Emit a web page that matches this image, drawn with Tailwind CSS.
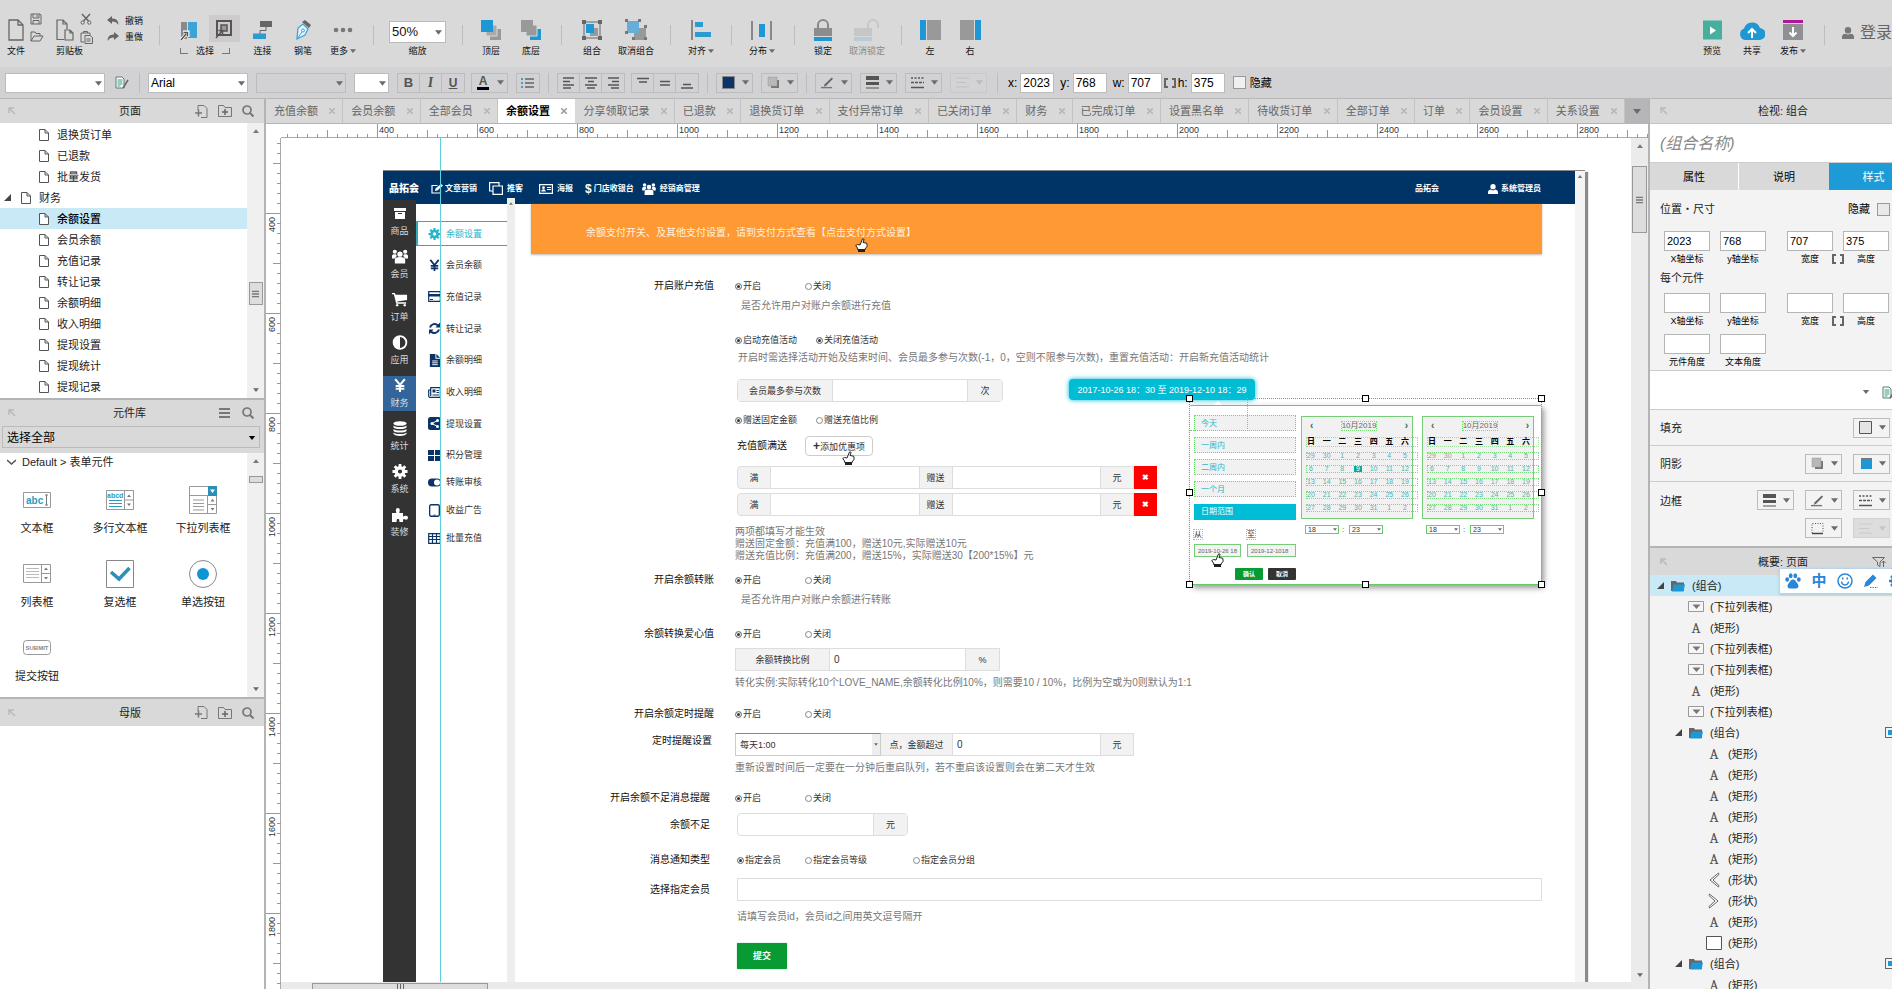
<!DOCTYPE html>
<html lang="zh-CN">
<head>
<meta charset="utf-8">
<title>余额设置</title>
<script src="https://cdn.jsdelivr.net/npm/@tailwindcss/browser@4"></script>
</head>
<body class="flex h-screen flex-col overflow-hidden bg-[#d9d9d9] font-['Liberation_Sans','Noto_Sans_CJK_SC',sans-serif] text-[11px] leading-4 text-[#222]">

<svg class="hidden" aria-hidden="true">
  <symbol id="caret" viewBox="0 0 8 5"><path d="M0 0h8L4 5z" fill="#6b6b6b"/></symbol>
  <symbol id="caretup" viewBox="0 0 8 5"><path d="M0 5h8L4 0z" fill="#777"/></symbol>
  <symbol id="doc" viewBox="0 0 10 12"><path d="M.5.5h5.500l3.500 3.500v7.500h-9zM6 .5v3.500h3.500" fill="#fff" stroke="#555"/></symbol>
  <symbol id="bigdoc" viewBox="0 0 16 22"><path d="M1 1h9l5 5v15H1zM10 1v5h5" fill="none" stroke="#666" stroke-width="1.300"/></symbol>
  <symbol id="save" viewBox="0 0 12 12"><path d="M1 1h9l1 1v9H1zM3 1v4h6V1M3 11V7.500h6V11M7 2v2" fill="none" stroke="#666"/></symbol>
  <symbol id="open" viewBox="0 0 14 11"><path d="M1 10V1h4l1 1.500h4V5M1 10l3-5h9l-3 5z" fill="none" stroke="#666" stroke-linejoin="round"/></symbol>
  <symbol id="docs" viewBox="0 0 18 22"><path d="M8 20.500H1V1h6l4 4v5M7 1v4h4M9 11h5l3 3v7H9zM14 11v3h3" fill="none" stroke="#666" stroke-width="1.200"/></symbol>
  <symbol id="cut" viewBox="0 0 12 12"><path d="M2 1l6.500 7M10 1L3.500 8" stroke="#666" stroke-width="1.500" fill="none"/><circle cx="2.700" cy="9.500" r="1.700" fill="none" stroke="#666"/><circle cx="9.300" cy="9.500" r="1.700" fill="none" stroke="#666"/></symbol>
  <symbol id="paste" viewBox="0 0 13 13"><path d="M4 11H1V2h9v2M3.500 2V.5h4V2M5 4.500h5l2.500 2V12.500H5zM6.500 8h4M6.500 10h4" fill="none" stroke="#666"/></symbol>
  <symbol id="undo" viewBox="0 0 12 10"><path d="M0 4l5-4v2.500c4 0 6.500 2 6.500 6.500C10 6.500 8 5.500 5 5.500V8z" fill="#666"/></symbol>
  <symbol id="redo" viewBox="0 0 12 10"><path d="M12 4L7 0v2.500C3 2.500.5 4.500.5 9 2 6.500 4 5.500 7 5.500V8z" fill="#666"/></symbol>
  <symbol id="sel1" viewBox="0 0 18 20"><path d="M1 1h6v17H1z" fill="#8a8a8a"/><path d="M8 1h9v16H8z" fill="#3da4d8"/><path d="M1 19l5-6M3 11h5v5" stroke="#fff" stroke-width="3" fill="none"/><path d="M1 19l5-6M3.500 11.500h4v4" stroke="#555" stroke-width="1.500" fill="none"/></symbol>
  <symbol id="sel2" viewBox="0 0 18 20"><path d="M2 2h14v14H2z" fill="none" stroke="#555" stroke-width="2"/><path d="M6 6h6v6H6z" fill="#999" stroke="#555" stroke-width="1.500"/><path d="M1 19l6-7M3.500 11.500h4v4" stroke="#555" stroke-width="1.500" fill="none"/></symbol>
  <symbol id="connect" viewBox="0 0 20 20"><path d="M7 1h12v6H7z" fill="#666"/><path d="M13 7v3.500H7V14" stroke="#666" fill="none"/><path d="M0 13.500h13V19H0z" fill="#2b9bd4"/></symbol>
  <symbol id="pen" viewBox="0 0 16 20"><path d="M2 19L3 8l5-4 5 5-3 6z" fill="#e8f4fb" stroke="#3da4d8" stroke-width="1.300"/><path d="M2 19l5-7" stroke="#3da4d8"/><circle cx="8" cy="10.500" r="1.500" fill="none" stroke="#3da4d8"/><path d="M7 2l3-2 6 5-2 3z" fill="#666"/></symbol>
  <symbol id="front" viewBox="0 0 20 20"><path d="M9 9h11v11H9z" fill="#999"/><path d="M5 5h11v11H5z" fill="#aaa" stroke="#d9d9d9"/><path d="M0 0h12v12H0z" fill="#1f97d4"/></symbol>
  <symbol id="back" viewBox="0 0 20 20"><path d="M9 9h11v11H9z" fill="#1f97d4"/><path d="M5 5h11v11H5z" fill="#999" stroke="#d9d9d9"/><path d="M0 0h12v12H0z" fill="#999"/></symbol>
  <symbol id="group" viewBox="0 0 22 22"><path d="M3 3h16v16H3z" fill="none" stroke="#666"/><path d="M9 9h8v8H9z" fill="#999"/><path d="M5 5h8v9H5z" fill="#1f97d4"/><path d="M1 1h4v4H1zM17 1h4v4h-4zM1 17h4v4H1zM17 17h4v4h-4z" fill="#666"/></symbol>
  <symbol id="ungroup" viewBox="0 0 24 22"><path d="M10 9h12v12H10z" fill="#999"/><path d="M3 2h12v12H3z" fill="#68add8"/><path d="M1 0h3v3H1zM14 0h3v3h-3zM1 12h3v3H1zM20 6h3v3h-3zM8 18h3v3H8zM20 18h3v3h-3z" fill="#777"/></symbol>
  <symbol id="align" viewBox="0 0 20 20"><path d="M0 0h2v20H0z" fill="#888"/><path d="M4 2h8v5H4zM4 12h16v5H4z" fill="#2b9bd4"/></symbol>
  <symbol id="dist" viewBox="0 0 22 20"><path d="M0 1h2v19H0zM19 1h2v19h-2z" fill="#888"/><path d="M8 4h6v13H8z" fill="#1f97d4"/></symbol>
  <symbol id="lock" viewBox="0 0 18 22"><path d="M4 10V6a5 5 0 0 1 10 0v4" fill="none" stroke="#888" stroke-width="2"/><path d="M0 9h18v8H0z" fill="#8c8c8c"/><path d="M0 18h18v4H0z" fill="#1f97d4"/></symbol>
  <symbol id="unlock" viewBox="0 0 26 22"><path d="M14 9V6a5 5 0 0 1 10 0v3" fill="none" stroke="#c6c6c6" stroke-width="2"/><path d="M0 9h18v8H0z" fill="#c6c6c6"/><path d="M0 18h18v4H0z" fill="#b7cbd9"/></symbol>
  <symbol id="pleft" viewBox="0 0 21 20"><path d="M0 0h6v20H0z" fill="#1f97d4"/><path d="M7 0h14v20H7z" fill="#999"/></symbol>
  <symbol id="pright" viewBox="0 0 21 20"><path d="M15 0h6v20h-6z" fill="#1f97d4"/><path d="M0 0h14v20H0z" fill="#999"/></symbol>
  <symbol id="play" viewBox="0 0 19 19"><path d="M0 0h19v19H0z" fill="#47b09c"/><path d="M7 6v8l6-4z" fill="#fff"/></symbol>
  <symbol id="cloud" viewBox="0 0 26 20"><path d="M6 20a6 6 0 0 1-1-11.500A8.500 8.500 0 0 1 21 8a6 6 0 0 1-1 12z" fill="#1f97d4"/><path d="M13 18V9M9 13l4-4 4 4" stroke="#fff" stroke-width="2" fill="none"/></symbol>
  <symbol id="publish" viewBox="0 0 20 20"><path d="M0 0h20v3H0z" fill="#b0189b"/><path d="M0 4h20v16H0z" fill="#8f8f94"/><path d="M10 7v9M6.500 12.500L10 16l3.500-3.500" stroke="#fff" stroke-width="2" fill="none"/></symbol>
  <symbol id="user" viewBox="0 0 12 12"><circle cx="6" cy="3.200" r="3.200"/><path d="M0 12V9.500C0 7.500 2 7 3.500 6.500a4 4 0 0 0 5 0C10 7 12 7.500 12 9.500V12z"/></symbol>
  <symbol id="styledoc" viewBox="0 0 14 13"><path d="M1 1h6l2 2v9H1z" fill="#fff" stroke="#5a7a70"/><path d="M2.500 4h5M2.500 6h5M2.500 8h5M2.500 10h3" stroke="#2e9c7a"/><path d="M8 12l5-8" stroke="#666" stroke-width="1.500"/></symbol>
  <symbol id="bullets" viewBox="0 0 14 12"><path d="M0 1h2v2H0zM0 5h2v2H0zM0 9h2v2H0z" fill="#4a9cc8"/><path d="M4 2h9M4 6h9M4 10h9" stroke="#666" stroke-width="1.500"/></symbol>
  <symbol id="al" viewBox="0 0 12 12"><path d="M0 1h11M0 4.500h7M0 8h11M0 11h8" stroke="#555" stroke-width="1.500"/></symbol>
  <symbol id="ac" viewBox="0 0 12 12"><path d="M0 1h12M3 4.500h6M0 8h12M2 11h8" stroke="#555" stroke-width="1.500"/></symbol>
  <symbol id="ar" viewBox="0 0 12 12"><path d="M1 1h11M5 4.500h7M1 8h11M4 11h8" stroke="#555" stroke-width="1.500"/></symbol>
  <symbol id="vt" viewBox="0 0 12 12"><path d="M0 1.500h12M2 5h8" stroke="#555" stroke-width="1.500"/></symbol>
  <symbol id="vm" viewBox="0 0 12 12"><path d="M1 4.500h10M1 8h10" stroke="#555" stroke-width="1.500"/></symbol>
  <symbol id="vb" viewBox="0 0 12 12"><path d="M2 7.500h8M0 11h12" stroke="#555" stroke-width="1.500"/></symbol>
  <symbol id="fillnavy" viewBox="0 0 13 13"><path d="M.5.5h12v12H.5z" fill="#0b3468" stroke="#888"/></symbol>
  <symbol id="fillgray" viewBox="0 0 13 13"><path d="M.5.5h12v12H.5z" fill="#e4e4e6" stroke="#555"/></symbol>
  <symbol id="fillblue" viewBox="0 0 13 13"><path d="M2 1h11v11H2z" fill="#1f97d4"/><path d="M2.500 12V1.500H13" fill="none" stroke="#777"/></symbol>
  <symbol id="shadow" viewBox="0 0 13 13"><path d="M4 4h8v8H4z" fill="#777"/><path d="M1 1h9v9H1z" fill="#b8b8b8" stroke="#999" stroke-width=".5"/></symbol>
  <symbol id="pencil" viewBox="0 0 14 13"><path d="M4 8.500l7.500-7.500 1.500 1.500-7.500 7.500-2.500 1z" fill="#666"/><path d="M0 12h12" stroke="#777" stroke-width="1.500"/></symbol>
  <symbol id="lines" viewBox="0 0 13 13"><path d="M0 0h13v4H0zM0 6h13v3H0zM0 11.500h13v1H0z" fill="#555"/></symbol>
  <symbol id="dashes" viewBox="0 0 13 13"><path d="M0 2h13" stroke="#555" stroke-width="1.500" stroke-dasharray="2 1.500"/><path d="M0 6.500h13" stroke="#555" stroke-width="1.500" stroke-dasharray="3 1"/><path d="M0 11.500h13" stroke="#555" stroke-width="1.500"/></symbol>
  <symbol id="arrows" viewBox="0 0 13 13"><path d="M0 2h13M0 6.500h10M0 11h13" stroke="#bbb"/></symbol>
  <symbol id="borderbox" viewBox="0 0 13 13"><path d="M1 11V1.500h11V11" fill="none" stroke="#555" stroke-dasharray="1 1.500"/><path d="M1 11.500h11" stroke="#444" stroke-width="1.500"/></symbol>
  <symbol id="link" viewBox="0 0 12 10"><path d="M4 1H1v8h3M8 1h3v8H8" fill="none" stroke="#666" stroke-width="2"/></symbol>
  <symbol id="pin" viewBox="0 0 8 8"><path d="M1 6V1h5M1 1l6 6" fill="none" stroke="#b9b9b9" stroke-width="1.500"/></symbol>
  <symbol id="addpage" viewBox="0 0 13 13"><path d="M3 5V.5h6l3 3v9H6" fill="none" stroke="#777"/><path d="M0 8h7M3.500 4.500v7" stroke="#777" stroke-width="1.500"/></symbol>
  <symbol id="addfolder" viewBox="0 0 14 12"><path d="M.5 11.500v-11h5L7 2.500h6.500v9z" fill="none" stroke="#777"/><path d="M4 7h6M7 4v6" stroke="#666" stroke-width="1.500"/></symbol>
  <symbol id="search" viewBox="0 0 12 12"><circle cx="5" cy="5" r="4" fill="none" stroke="#777" stroke-width="1.700"/><path d="M8 8l3.500 3.500" stroke="#777" stroke-width="2"/></symbol>
  <symbol id="menu" viewBox="0 0 11 10"><path d="M0 1h11M0 5h11M0 9h11" stroke="#777" stroke-width="2"/></symbol>
  <symbol id="tri" viewBox="0 0 7 7"><path d="M7 0v7H0z" fill="#444"/></symbol>
  <symbol id="folder" viewBox="0 0 14 12"><path d="M0 11V1h5l1 1.500h7V11z" fill="#666"/><path d="M1 11.500L2.500 4.500H14L12.500 11.500z" fill="#1f97d4"/></symbol>
  <symbol id="drop" viewBox="0 0 16 11"><path d="M.5 10.500V.5h15v10z" fill="#f6f6f6" stroke="#999"/><path d="M4.500 3.500h8L8.500 8z" fill="#777"/></symbol>
  <symbol id="rect" viewBox="0 0 16 14"><path d="M.5.5h15v13H.5z" fill="#fff" stroke="#555"/></symbol>
  <symbol id="lt" viewBox="0 0 12 16"><path d="M10.500 1L2 8l8.500 7 .5-1.500L5 8l6-5.500z" fill="#fff" stroke="#666"/></symbol>
  <symbol id="gt" viewBox="0 0 12 16"><path d="M1.500 1L10 8l-8.500 7L1 13.500 7 8 1 2.500z" fill="#fff" stroke="#666"/></symbol>
  <symbol id="funnel" viewBox="0 0 14 10"><path d="M.5.5h12L8 5v4.500L5.500 8V5zM11.500 10V4M9.500 6l2-2 2 2" fill="none" stroke="#666"/></symbol>
  <symbol id="hand" viewBox="0 0 13 14"><path d="M3 12l-.5-2L.7 7.500 2.500 6.500 5 7l2.500-6Q9 .3 9 1.800L8 4.500l3.700.7.500 3L10 11v1z" fill="#fff" stroke="#222"/><path d="M3 11h7v3H3z" fill="#222"/></symbol>
  <!-- page icons -->
  <symbol id="archive" viewBox="0 0 12 11"><path d="M0 0h12v3H0zM1 4h10v7H1z"/><path d="M4 5.500h4" stroke="#333" stroke-width="1"/></symbol>
  <symbol id="users" viewBox="0 0 17 15"><circle cx="8.500" cy="5" r="2.800"/><circle cx="3" cy="2.500" r="2.200"/><circle cx="14" cy="2.500" r="2.200"/><path d="M3 15v-4c0-2 1.500-3 5.500-3s5.500 1 5.500 3v4zM0 9.500V7c0-1.500 1-2 3-2 1.500 0 2 .5 2 2L3 9.500zM17 9.500V7c0-1.500-1-2-3-2-1.500 0-2 .5-2 2l2 2.500z"/></symbol>
  <symbol id="cart" viewBox="0 0 17 14"><path d="M0 0h3l.8 2H16v5.500L5.500 9l.3 1H15v1.500H4.500L2 1.500H0z"/><circle cx="5.500" cy="13" r="1.300"/><circle cx="13.500" cy="13" r="1.300"/></symbol>
  <symbol id="adjust" viewBox="0 0 16 16"><circle cx="8" cy="8" r="6.800" fill="none" stroke="currentColor" stroke-width="2"/><path d="M8 1a7 7 0 0 0 0 14z"/></symbol>
  <symbol id="yen" viewBox="0 0 12 14"><path d="M1.500 1L6 6.500 10.500 1M6 6.500V13M2 7.500h8M2 10h8" fill="none" stroke="currentColor" stroke-width="1.900"/></symbol>
  <symbol id="db" viewBox="0 0 14 15"><ellipse cx="7" cy="2.500" rx="6.500" ry="2.300"/><path d="M.5 4.500c2 2 11 2 13 0V6.500c-2 2-11 2-13 0zM.5 8c2 2 11 2 13 0v2c-2 2-11 2-13 0zM.5 11.500c2 2 11 2 13 0V13c-2 2.500-11 2.500-13 0z"/></symbol>
  <symbol id="gear" viewBox="0 0 16 16"><circle cx="8" cy="8" r="4" fill="none" stroke="currentColor" stroke-width="3.500"/><path d="M8 0v4M8 12v4M0 8h4M12 8h4M2.300 2.300l3 3M10.700 10.700l3 3M13.700 2.300l-3 3M5.300 10.700l-3 3" stroke="currentColor" stroke-width="3"/></symbol>
  <symbol id="puzzle" viewBox="0 0 16 15"><path d="M0 6h4c.8 0-.2-1.500-.2-3a2 2 0 0 1 4 0c0 1.500-1 3-.2 3H11v3c0 1 1.500-.2 3-.2a2 2 0 0 1 0 4c-1.500 0-3-1-3 0V15H7.500c-.5-1 .5-3-1.500-3s-1 2-1.500 3H0z"/></symbol>
  <symbol id="card" viewBox="0 0 13 11"><path d="M.7.700h11.600v9.600H.7z" fill="none" stroke="currentColor" stroke-width="1.200"/><path d="M0 3h13v2.500H0zM2 8h3v1H2z"/></symbol>
  <symbol id="sync" viewBox="0 0 13 13"><path d="M2 5.500A4.700 4.700 0 0 1 10 3.500M11 7.500A4.700 4.700 0 0 1 3 9.500" fill="none" stroke="currentColor" stroke-width="2"/><path d="M12 .5V5.500H7.500zM1 12.500V7.500h4.500z"/></symbol>
  <symbol id="file" viewBox="0 0 12 14"><path d="M1 0h6v5h5v9H1zM8 0l4 4H8z"/><path d="M3.500 7.500h6M3.500 9.500h6M3.500 11.500h6" stroke="#fff"/></symbol>
  <symbol id="news" viewBox="0 0 13 11"><path d="M2.700.700h9.600v9.600H1.500Q.700 10 .700 9V3h2zM2.700 3v6" fill="none" stroke="currentColor" stroke-width="1.200"/><path d="M4.500 2.500h3v3h-3zM8.500 3h2.500v1H8.500zM8.500 5h2.500v1H8.500zM4.500 7.500H11v1H4.500z"/></symbol>
  <symbol id="share" viewBox="0 0 13 13"><rect width="13" height="13" rx="2.500"/><path d="M9.500 3.500L4 6.500l5.500 3" stroke="#fff" fill="none"/><circle cx="9.500" cy="3.500" r="1.500" fill="#fff"/><circle cx="4" cy="6.500" r="1.500" fill="#fff"/><circle cx="9.500" cy="9.500" r="1.500" fill="#fff"/></symbol>
  <symbol id="tiles" viewBox="0 0 13 11"><path d="M0 0h6v5H0zM7 0h6v5H7zM0 6h6v5H0zM7 6h6v5H7z"/></symbol>
  <symbol id="toggle" viewBox="0 0 13 8"><rect width="13" height="8" rx="4"/><circle cx="9" cy="4" r="3" fill="#fff"/></symbol>
  <symbol id="tablet" viewBox="0 0 12 14"><rect x=".8" y=".8" width="10.400" height="12.400" rx="1.500" fill="none" stroke="currentColor" stroke-width="1.400"/><path d="M5 11.500h2v1H5z"/></symbol>
  <symbol id="table" viewBox="0 0 13 11"><path d="M.700.700h11.600v9.600H.700zM0 3.500h13M0 6.500h13M4.500 1v9.500M8.500 1v9.500" fill="none" stroke="currentColor" stroke-width="1.200"/></symbol>
  <symbol id="edit" viewBox="0 0 12 10"><path d="M9.500 6v3H1V1.500h5.500" fill="none" stroke="currentColor" stroke-width="1.200"/><path d="M4 7l.5-2.500L10 0l2 1.500L6.500 6.500z" fill="currentColor"/></symbol>
  <symbol id="clone" viewBox="0 0 14 13"><path d="M4 4h9.400v8.400H4zM10 3.500V.6H.6V9H4" fill="none" stroke="currentColor" stroke-width="1.200"/></symbol>
  <symbol id="idcard" viewBox="0 0 14 10"><path d="M.6.6h12.800v8.800H.6z" fill="none" stroke="currentColor" stroke-width="1.200"/><circle cx="4.500" cy="3.700" r="1.400"/><path d="M2.300 7.500c0-3 4.400-3 4.400 0zM8 3h4v1H8zM8 5h4v1H8z"/></symbol>
</svg>

<!-- main toolbar -->
<header class="flex h-[67px] shrink-0 pt-[19px] text-[9px] leading-3 text-[#111]" id="toolbar">
  <button class="ml-1.5 flex h-[38px] w-5 flex-col items-center gap-1 whitespace-nowrap"><svg class="h-[22px] w-4"><use href="#bigdoc"/></svg>文件</button>
  <div class="-mt-1.5 ml-1 flex flex-col gap-1.5"><button aria-label="保存"><svg class="h-3 w-3"><use href="#save"/></svg></button><button aria-label="打开"><svg class="h-[11px] w-3.5"><use href="#open"/></svg></button></div>
  <button class="ml-3 flex h-[38px] w-6 flex-col items-start gap-1 whitespace-nowrap"><svg class="h-[22px] w-[18px]"><use href="#docs"/></svg>剪贴板</button>
  <div class="-mt-1.5 flex flex-col gap-1.5"><button aria-label="剪切"><svg class="h-3 w-3"><use href="#cut"/></svg></button><button aria-label="粘贴"><svg class="h-[13px] w-[13px]"><use href="#paste"/></svg></button></div>
  <div class="-mt-1 ml-3.5 flex flex-col gap-1"><button class="flex items-center gap-1.5"><svg class="h-2.5 w-3"><use href="#undo"/></svg>撤销</button><button class="flex items-center gap-1.5"><svg class="h-2.5 w-3"><use href="#redo"/></svg>重做</button></div>
  <i class="ml-4 mt-1.5 h-5 w-px bg-[#bdbdbd]"></i>
  <div class="ml-5 w-[60px]">
    <div class="-mt-1 flex justify-between"><button class="h-[27px] w-[18px] pt-1" aria-label="相交选中"><svg class="h-5 w-[18px]"><use href="#sel1"/></svg></button><button class="h-[27px] w-[31px] bg-[#cdcbcc] pl-1.5" aria-label="包含选中"><svg class="h-5 w-[18px]"><use href="#sel2"/></svg></button></div>
    <div class="mt-[3px] flex items-center gap-2"><i class="h-1.5 w-2 border-b border-l border-[#777]"></i><span>选择</span><i class="h-1.5 w-2 border-b border-r border-[#777]"></i></div>
  </div>
</header>

<!-- format bar -->
<div class="flex h-8 shrink-0 items-center border-b border-[#b8b8b8] bg-[#d2d2d4] text-[11px]" id="format"></div>

<div class="flex min-h-0 flex-1">
  <!-- left column -->
  <aside class="flex w-[266px] shrink-0 flex-col border-r-2 border-[#b4b4b4]">
    <div class="flex h-6 shrink-0 items-center pl-2 pr-2.5"><svg class="h-2 w-2"><use href="#pin"/></svg><h2 class="ml-[103px] w-6 whitespace-nowrap">页面</h2><span class="ml-auto flex items-center gap-2.5"><svg class="h-[13px] w-[13px]"><use href="#addpage"/></svg><svg class="h-3 w-3.5"><use href="#addfolder"/></svg><svg class="h-3 w-3"><use href="#search"/></svg></span></div>
    <div class="flex h-[277px] shrink-0 overflow-hidden border-b-2 border-[#b4b4b4] bg-white">
      <ul class="flex-1 pt-px" id="pages"></ul>
      <div class="flex w-[17px] flex-col items-center justify-between bg-[#f0f0f0] py-1.5"><svg class="h-1 w-1.5"><use href="#caretup"/></svg><i class="mt-[66px] flex h-[23px] w-3.5 items-center justify-center border border-[#999] bg-[#ddd]"><svg class="h-2 w-[7px]"><use href="#menu"/></svg></i><svg class="h-1 w-1.5"><use href="#caret"/></svg></div>
    </div>
    <div class="flex h-[26px] shrink-0 items-center pl-2 pr-2.5"><svg class="h-2 w-2"><use href="#pin"/></svg><h2 class="ml-[97px] w-9 whitespace-nowrap">元件库</h2><span class="ml-auto flex items-center gap-3"><svg class="h-2.5 w-[11px]"><use href="#menu"/></svg><svg class="h-3 w-3"><use href="#search"/></svg></span></div>
    <div class="relative mb-[5px] ml-0.5 mr-1 h-[22px] shrink-0"><select aria-label="元件库选择" class="block h-full w-full appearance-none border border-[#bbb] bg-[#d9d9d9] pl-1 pt-0.5 text-xs text-black"><option>选择全部</option></select><svg class="pointer-events-none absolute right-1 top-2.5 h-1 w-2 brightness-0"><use href="#caret"/></svg></div>
    <div class="flex h-[246px] shrink-0 border-b-2 border-[#b4b4b4] bg-white">
      <div class="min-w-0 flex-1">
        <div class="flex h-[18px] items-center gap-1.5 pl-[7px]"><svg class="h-[6px] w-[9px]" viewBox="0 0 9 6"><path d="M0 1l4.500 4L9 1" fill="none" stroke="#555" stroke-width="1.500"/></svg>Default &gt; 表单元件</div>
        <div class="grid grid-cols-[74px_92px_74px] pt-[15px] text-center">
          <div class="flex h-[74px] flex-col items-center"><svg class="my-1.5 h-4 w-7" viewBox="0 0 28 16"><path d="M.5.5h27v15H.5z" fill="#fff" stroke="#999"/><text x="3" y="12" font-size="10" font-weight="bold" fill="#2b9bc0">abc</text><path d="M22 3h3M22 13h3M23.500 3v10" stroke="#777"/></svg><span class="mt-1.5">文本框</span></div>
          <div class="flex h-[74px] flex-col items-center"><svg class="my-1 h-5 w-7" viewBox="0 0 28 20"><path d="M.5.5h27v19H.5zM18.500 1v18M18.500 10h9" fill="#fff" stroke="#999"/><text x="1" y="8" font-size="7" font-weight="bold" fill="#2b9bc0">abcd</text><path d="M3 10.500h13M3 13.500h13M3 16.500h13" stroke="#2b9bc0"/><path d="M21 7l2-2.500L25 7zM21 13.500h4L23 16z" fill="#777"/></svg><span class="mt-1.5">多行文本框</span></div>
          <div class="flex h-[74px] flex-col items-center"><svg class="h-7 w-7" viewBox="0 0 28 28"><path d="M.5.5h27v27H.5zM0 9.500h28M18.500 10v18M18.500 18.500h9" fill="#fff" stroke="#999"/><path d="M19 0h9v10h-9z" fill="#2b8fb8"/><path d="M21 3.500h5L23.500 7z" fill="#fff"/><path d="M4 14h11M4 17.500h11M4 20.500h11M4 24h11" stroke="#999"/><path d="M21.500 15.500l2-2.500 2 2.500zM21.500 22h4l-2 2.500z" fill="#777"/></svg><span class="mt-1.5">下拉列表框</span></div>
          <div class="flex h-[74px] flex-col items-center"><svg class="my-1 h-5 w-7" viewBox="0 0 28 20"><path d="M.5.5h27v18H.5zM18.500 1v18M18.500 9.500h9" fill="#fff" stroke="#999"/><path d="M3 4.500h13M3 7.500h13M3 10.500h13M3 13.500h13" stroke="#bbb"/><path d="M21 6l2-2.500L25 6zM21 13h4l-2 2.500z" fill="#777"/></svg><span class="mt-1.5">列表框</span></div>
          <div class="flex h-[74px] flex-col items-center"><svg class="h-7 w-7" viewBox="0 0 28 28"><path d="M.5.5h27v27H.5z" fill="#fff" stroke="#888"/><path d="M5 12l8 7L23.500 8" fill="none" stroke="#2b8fb8" stroke-width="3.500"/></svg><span class="mt-1.5">复选框</span></div>
          <div class="flex h-[74px] flex-col items-center"><svg class="h-7 w-7" viewBox="0 0 28 28"><circle cx="14" cy="14" r="13.500" fill="#fff" stroke="#888"/><circle cx="14" cy="14" r="6" fill="#0e95d6"/></svg><span class="mt-1.5">单选按钮</span></div>
          <div class="flex h-[60px] flex-col items-center"><svg class="my-1.5 h-4 w-7" viewBox="0 0 28 16"><rect x=".5" y=".5" width="27" height="14" rx="3" fill="#fff" stroke="#999"/><text x="14" y="10" text-anchor="middle" font-size="6" font-weight="bold" fill="#888">SUBMIT</text></svg><span class="mt-1.5">提交按钮</span></div>
        </div>
      </div>
      <div class="flex w-[17px] flex-col items-center bg-[#f0f0f0] py-1.5"><svg class="h-1 w-1.5"><use href="#caretup"/></svg><i class="mt-[13px] h-[7px] w-3.5 border border-[#999] bg-[#ddd]"></i><svg class="mt-auto h-1 w-1.5"><use href="#caret"/></svg></div>
    </div>
    <div class="flex h-[27px] shrink-0 items-center pl-2 pr-2.5"><svg class="h-2 w-2"><use href="#pin"/></svg><h2 class="ml-[103px] w-6 whitespace-nowrap">母版</h2><span class="ml-auto flex items-center gap-2.5"><svg class="h-[13px] w-[13px]"><use href="#addpage"/></svg><svg class="h-3 w-3.5"><use href="#addfolder"/></svg><svg class="h-3 w-3"><use href="#search"/></svg></span></div>
    <div class="flex-1 bg-white"></div>
  </aside>

  <!-- editor -->
  <main class="flex min-w-0 flex-1 flex-col">
    <div class="flex h-[25px] shrink-0 overflow-hidden border-b border-[#b4b4b4] text-[#666]"><div class="flex min-w-0 flex-1 overflow-hidden" id="tabs"></div><button class="flex w-[23px] shrink-0 items-center justify-center bg-[#b6b6b8]" aria-label="更多标签"><svg class="h-[5px] w-2"><use href="#caret"/></svg></button></div>
    <svg class="h-3.5 w-full shrink-0 bg-white" id="rulerx"></svg>
    <div class="flex min-h-0 flex-1">
      <svg class="h-full w-[15px] shrink-0 bg-white" id="rulery"></svg>
      <div class="flex min-w-0 flex-1 flex-col">
        <div class="relative min-h-0 flex-1 overflow-hidden bg-white pl-[102px] pr-[46px] pt-8">
          <!-- artboard -->
          <div class="relative flex h-[860px] border-t border-[#888] shadow-[3px_2px_1px_#8a8a8a]">
            <div class="flex min-w-0 flex-1 flex-col">
              <nav class="flex h-[33px] shrink-0 items-center bg-[#013466] pl-1.5 pt-0.5 text-[8px] font-bold text-white">
                <b class="text-[10px]">品拓会</b>
                <a href="#" class="ml-3 flex items-center gap-0.5"><svg class="h-2.5 w-3"><use href="#edit"/></svg>文章营销</a>
                <a href="#" class="ml-3 flex items-center gap-1"><svg class="h-[13px] w-3.5"><use href="#clone"/></svg>推客</a>
                <a href="#" class="ml-4 flex items-center gap-1"><svg class="h-2.5 w-3.5 fill-current"><use href="#idcard"/></svg>海报</a>
                <a href="#" class="ml-3 flex items-center gap-0.5"><span class="text-xs">$</span>门店收银台</a>
                <a href="#" class="ml-2 flex items-center gap-1"><svg class="h-3 w-3.5 fill-current"><use href="#users"/></svg>经销商管理</a>
                <span class="ml-auto mr-[49px]">品拓会</span>
                <a href="#" class="mr-[34px] flex items-center gap-[3px]"><svg class="h-3 w-2.5 fill-current"><use href="#user"/></svg>系统管理员</a>
              </nav>
              <div class="flex min-h-0 flex-1">
                <ul class="-mt-1 flex w-[33px] shrink-0 flex-col gap-2 bg-[#333] pt-1 text-[9px] leading-3 text-[#ddd]" id="side"></ul>
                <div class="w-[91px] shrink-0 pt-[17px] text-[9px] leading-3 text-[#333]" id="menu2"></div>
                <div class="-mt-1.5 flex w-2 shrink-0 justify-center bg-[#eee] pt-1"><svg class="h-[3px] w-1"><use href="#caretup"/></svg></div>

                <form class="min-w-0 flex-1 pl-4 pr-[33px] text-[10px] leading-4 text-[#333]">
                  <div class="flex h-[50px] items-center bg-[#ff9933] pl-[55px] pt-2 text-[#fff3e0] shadow-[0_1px_2px_#bbb]">余额支付开关、及其他支付设置，请到支付方式查看【点击支付方式设置】</div>

                  <div class="mt-[22px] flex h-5 items-center"><span class="w-[183px] text-right text-[#111]">开启账户充值</span><div class="ml-[21px] flex text-[9px]"><label class="flex w-[70px] items-center gap-px"><input type="radio" name="r1" checked class="h-[7px] w-[7px] appearance-none rounded-full border border-[#888] bg-white checked:bg-[#333] checked:shadow-[inset_0_0_0_1px_#fff]">开启</label><label class="flex items-center gap-px"><input type="radio" name="r1" class="h-[7px] w-[7px] appearance-none rounded-full border border-[#888] bg-white">关闭</label></div></div>
                  <p class="ml-[210px] mt-0.5 text-[#777]">是否允许用户对账户余额进行充值</p>

                  <div class="ml-[204px] mt-4 flex h-5 items-center text-[9px]"><label class="flex w-[81px] items-center gap-px"><input type="radio" name="r2" checked class="h-[7px] w-[7px] appearance-none rounded-full border border-[#888] bg-white checked:bg-[#333] checked:shadow-[inset_0_0_0_1px_#fff]">启动充值活动</label><label class="flex items-center gap-px"><input type="radio" name="r3" checked class="h-[7px] w-[7px] appearance-none rounded-full border border-[#888] bg-white checked:bg-[#333] checked:shadow-[inset_0_0_0_1px_#fff]">关闭充值活动</label></div>
                  <p class="ml-[207px] whitespace-nowrap text-[#777]">开启时需选择活动开始及结束时间、会员最多参与次数(-1，0，空则不限参与次数)，重置充值活动：开启新充值活动统计</p>

                  <div class="ml-[206px] mt-[13px] flex h-[23px] w-[266px] rounded-sm border border-[#ddd] text-center text-[9px] leading-[22px]"><label for="times" class="w-[95px] border-r border-[#ddd] bg-[#f2f2f2]">会员最多参与次数</label><input id="times" class="min-w-0 flex-1"><span class="w-[35px] border-l border-[#ddd] bg-[#f2f2f2]">次</span></div>

                  <div class="ml-[204px] mt-2 flex h-5 items-center text-[9px]"><label class="flex w-[81px] items-center gap-px"><input type="radio" name="r4" checked class="h-[7px] w-[7px] appearance-none rounded-full border border-[#888] bg-white checked:bg-[#333] checked:shadow-[inset_0_0_0_1px_#fff]">赠送固定金额</label><label class="flex items-center gap-px"><input type="radio" name="r4" class="h-[7px] w-[7px] appearance-none rounded-full border border-[#888] bg-white">赠送充值比例</label></div>

                  <div class="ml-[206px] mt-1.5 flex h-5 items-center"><span class="w-[68px] text-[#111]">充值额满送</span><button type="button" class="h-5 w-[68px] rounded-sm border border-[#ccc] text-[9px] leading-none"><b class="text-xs leading-none">+</b>添加优惠项</button></div>

                  <div class="ml-[206px] mt-2.5 flex h-[23px] w-[420px] text-center text-[9px] leading-[22px]"><label for="a1" class="w-[34px] rounded-l-sm border border-[#ddd] bg-[#f2f2f2]">满</label><input id="a1" class="min-w-0 flex-1 border-y border-[#ddd]"><label for="a2" class="w-[34px] border border-[#ddd] bg-[#f2f2f2]">赠送</label><input id="a2" class="min-w-0 flex-1 border-y border-[#ddd]"><span class="w-[34px] border border-[#ddd] bg-[#f2f2f2]">元</span><button type="button" class="w-[23px] bg-[#fe0000] text-[8px] font-bold text-white" aria-label="删除">✖</button></div>
                  <div class="ml-[206px] mt-1 flex h-[23px] w-[420px] text-center text-[9px] leading-[22px]"><label for="b1" class="w-[34px] rounded-l-sm border border-[#ddd] bg-[#f2f2f2]">满</label><input id="b1" class="min-w-0 flex-1 border-y border-[#ddd]"><label for="b2" class="w-[34px] border border-[#ddd] bg-[#f2f2f2]">赠送</label><input id="b2" class="min-w-0 flex-1 border-y border-[#ddd]"><span class="w-[34px] border border-[#ddd] bg-[#f2f2f2]">元</span><button type="button" class="w-[23px] bg-[#fe0000] text-[8px] font-bold text-white" aria-label="删除">✖</button></div>

                  <p class="ml-[204px] mt-2.5 leading-3 text-[#777]">两项都填写才能生效<br>赠送固定金额：充值满100，赠送10元,实际赠送10元<br>赠送充值比例：充值满200，赠送15%，实际赠送30【200*15%】元</p>

                  <div class="mt-2 flex h-5 items-center"><span class="w-[183px] text-right text-[#111]">开启余额转账</span><div class="ml-[21px] flex text-[9px]"><label class="flex w-[70px] items-center gap-px"><input type="radio" name="r5" checked class="h-[7px] w-[7px] appearance-none rounded-full border border-[#888] bg-white checked:bg-[#333] checked:shadow-[inset_0_0_0_1px_#fff]">开启</label><label class="flex items-center gap-px"><input type="radio" name="r5" class="h-[7px] w-[7px] appearance-none rounded-full border border-[#888] bg-white">关闭</label></div></div>
                  <p class="ml-[210px] mt-0.5 text-[#777]">是否允许用户对账户余额进行转账</p>

                  <div class="mt-4 flex h-5 items-center"><span class="w-[183px] text-right text-[#111]">余额转换爱心值</span><div class="ml-[21px] flex text-[9px]"><label class="flex w-[70px] items-center gap-px"><input type="radio" name="r6" checked class="h-[7px] w-[7px] appearance-none rounded-full border border-[#888] bg-white checked:bg-[#333] checked:shadow-[inset_0_0_0_1px_#fff]">开启</label><label class="flex items-center gap-px"><input type="radio" name="r6" class="h-[7px] w-[7px] appearance-none rounded-full border border-[#888] bg-white">关闭</label></div></div>
                  <div class="ml-[204px] mt-1 flex h-[23px] w-[265px] border border-[#ddd] text-center text-[9px] leading-[22px]"><label for="ratio" class="w-[94px] border-r border-[#ddd] bg-[#f2f2f2]">余额转换比例</label><input id="ratio" value="0" class="min-w-0 flex-1 pl-1 text-[10px]"><span class="w-[34px] border-l border-[#ddd] bg-[#f2f2f2]">%</span></div>
                  <p class="ml-[204px] mt-1 whitespace-nowrap text-[#777]">转化实例:实际转化10个LOVE_NAME,余额转化比例10%，则需要10 / 10%，比例为空或为0则默认为1:1</p>

                  <div class="mt-[13px] flex h-5 items-center"><span class="w-[183px] text-right text-[#111]">开启余额定时提醒</span><div class="ml-[21px] flex text-[9px]"><label class="flex w-[70px] items-center gap-px"><input type="radio" name="r7" checked class="h-[7px] w-[7px] appearance-none rounded-full border border-[#888] bg-white checked:bg-[#333] checked:shadow-[inset_0_0_0_1px_#fff]">开启</label><label class="flex items-center gap-px"><input type="radio" name="r7" class="h-[7px] w-[7px] appearance-none rounded-full border border-[#888] bg-white">关闭</label></div></div>
                  <div class="mt-[9px] flex h-[23px]"><label for="hour" class="w-[181px] text-right text-[#111]">定时提醒设置</label>
                    <div class="ml-[23px] flex w-[399px] text-center text-[9px] leading-[22px]"><span class="relative w-[146px]"><select id="hour" class="block h-full w-full appearance-none border border-[#ccc] border-t-[#888] bg-white pl-1 text-[9px]"><option>每天1:00</option></select><span class="pointer-events-none absolute right-px top-px flex h-[21px] w-2 items-center justify-center bg-[#eee]"><svg class="h-[3px] w-1"><use href="#caret"/></svg></span></span><label for="over" class="w-[71px] border-y border-[#ddd] bg-[#f2f2f2]">点，金额超过</label><input id="over" value="0" class="min-w-0 flex-1 border-y border-l border-[#ddd] pl-1 text-[10px]"><span class="w-[34px] border border-[#ddd] bg-[#f2f2f2]">元</span></div></div>
                  <p class="ml-[204px] mt-1 text-[#777]">重新设置时间后一定要在一分钟后重启队列，若不重启该设置则会在第二天才生效</p>

                  <div class="mt-3 flex h-5 items-center"><span class="w-[179px] text-right text-[#111]">开启余额不足消息提醒</span><div class="ml-[25px] flex text-[9px]"><label class="flex w-[70px] items-center gap-px"><input type="radio" name="r8" checked class="h-[7px] w-[7px] appearance-none rounded-full border border-[#888] bg-white checked:bg-[#333] checked:shadow-[inset_0_0_0_1px_#fff]">开启</label><label class="flex items-center gap-px"><input type="radio" name="r8" class="h-[7px] w-[7px] appearance-none rounded-full border border-[#888] bg-white">关闭</label></div></div>
                  <div class="mt-[5px] flex h-[23px] items-center"><label for="low" class="w-[179px] text-right text-[#111]">余额不足</label><div class="ml-[27px] flex h-[23px] w-[171px] rounded-sm border border-[#ddd] text-center text-[9px] leading-[22px]"><input id="low" class="min-w-0 flex-1"><span class="w-[34px] border-l border-[#ddd] bg-[#f2f2f2]">元</span></div></div>
                  <div class="mt-3.5 flex h-5 items-center"><span class="w-[179px] text-right text-[#111]">消息通知类型</span><div class="ml-[27px] flex text-[9px]"><label class="flex w-[68px] items-center gap-px"><input type="radio" name="r9" checked class="h-[7px] w-[7px] appearance-none rounded-full border border-[#888] bg-white checked:bg-[#333] checked:shadow-[inset_0_0_0_1px_#fff]">指定会员</label><label class="flex w-[108px] items-center gap-px"><input type="radio" name="r9" class="h-[7px] w-[7px] appearance-none rounded-full border border-[#888] bg-white">指定会员等级</label><label class="flex items-center gap-px"><input type="radio" name="r9" class="h-[7px] w-[7px] appearance-none rounded-full border border-[#888] bg-white">指定会员分组</label></div></div>
                  <div class="mt-2 flex h-[23px] items-center"><label for="member" class="w-[179px] text-right text-[#111]">选择指定会员</label><input id="member" class="ml-[27px] h-[23px] min-w-0 flex-1 border border-[#ddd]"></div>
                  <p class="ml-[206px] mt-2 text-[#777]">请填写会员id，会员id之间用英文逗号隔开</p>
                  <button type="button" class="ml-[206px] mt-[18px] block h-[26px] w-[50px] rounded-[1px] bg-[#089a33] text-[9px] font-bold text-white shadow-[0_0_1px_#089a33]">提交</button>
                </form>
              </div>
            </div>
            <div class="flex w-2.5 shrink-0 justify-center bg-[#f4f4f4] pt-1"><svg class="h-[3px] w-1.5"><use href="#caretup"/></svg></div>

            <!-- widgets floating over the artboard -->
            <div class="absolute left-[686px] top-[208px] flex h-[21px] w-[186px] items-center justify-center whitespace-nowrap rounded-sm bg-[#00bcd4] text-[9px] text-white shadow-[0_0_5px_#00bcd4]">2017-10-26 18：30 至 2019-12-10 18：29</div>
            <div class="absolute left-[806px] top-[227px] h-[187px] w-[353px] border border-dotted border-[#6a6] pt-1.5" id="popup">
              <div class="relative flex h-[180px] border-y border-[#6c6] bg-white pl-1 text-[8px] shadow-[3px_3px_6px_#999]">
                <div class="w-[102px] text-[#2ab5c8]">
                  <button class="mt-[9px] block h-4 w-full border border-dotted border-[#6d6] bg-[#f1f1f1] pl-1.5 text-left leading-[15px]">今天</button>
                  <button class="mt-1.5 block h-4 w-full border border-dotted border-[#6d6] bg-[#f1f1f1] pl-1.5 text-left leading-[15px]">一周内</button>
                  <button class="mt-1.5 block h-4 w-full border border-dotted border-[#6d6] bg-[#f1f1f1] pl-1.5 text-left leading-[15px]">二周内</button>
                  <button class="mt-1.5 block h-4 w-full border border-dotted border-[#6d6] bg-[#f1f1f1] pl-1.5 text-left leading-[15px]">一个月</button>
                  <button class="mt-[7px] block h-4 w-full bg-[#00bcd4] pl-[7px] text-left leading-4 text-white">日期范围</button>
                  <div class="mt-2.5 grid grid-cols-[47px_49px] gap-x-1.5 leading-[10px] text-[#333]"><label for="from"><span class="outline-1 outline-dotted outline-[#7d7]">从</span></label><label for="to"><span class="outline-1 outline-dotted outline-[#7d7]">至</span></label>
                  <input id="from" value="2019-10-26 18" class="mt-1 h-[13px] min-w-0 border border-[#7c7] bg-[#f3f3f3] pl-[3px] text-[6px] text-[#666]"><input id="to" value="2019-12-1018" class="mt-1 h-[13px] min-w-0 border border-[#7c7] bg-[#f3f3f3] pl-[3px] text-[6px] text-[#666]"></div>
                  <div class="mt-[11px] flex justify-end gap-[5px] text-[6px] font-bold leading-3 text-white"><button class="h-3 w-7 rounded-[1px] bg-[#089a33]">确认</button><button class="h-3 w-7 rounded-[1px] bg-[#333]">取消</button></div>
                </div>
                <div class="ml-[5px] mt-2.5 flex gap-[9px]" id="cals"></div>
              </div>
              <i class="absolute -top-px left-0 h-[33px] w-[58px] border-b border-r border-dotted border-[#6d6]"></i>
              <i class="absolute left-6 top-0.5 border-x-4 border-b-4 border-x-transparent border-b-white"></i>
              <i class="absolute -left-1 -top-1 h-[7px] w-[7px] border border-black bg-white"></i><i class="absolute -top-1 left-[172px] h-[7px] w-[7px] border border-black bg-white"></i><i class="absolute -right-1 -top-1 h-[7px] w-[7px] border border-black bg-white"></i>
              <i class="absolute -left-1 top-[90px] h-[7px] w-[7px] border border-black bg-white"></i><i class="absolute -right-1 top-[90px] h-[7px] w-[7px] border border-black bg-white"></i>
              <i class="absolute -bottom-1 -left-1 h-[7px] w-[7px] border border-black bg-white"></i><i class="absolute -bottom-1 left-[172px] h-[7px] w-[7px] border border-black bg-white"></i><i class="absolute -bottom-1 -right-1 h-[7px] w-[7px] border border-black bg-white"></i>
            </div>
            <svg class="absolute left-[472px] top-[67px] h-3.5 w-[13px]"><use href="#hand"/></svg>
            <svg class="absolute left-[459px] top-[280px] h-3.5 w-[13px]"><use href="#hand"/></svg>
            <svg class="absolute left-[828px] top-[382px] h-3.5 w-[13px]"><use href="#hand"/></svg>
          </div>
          <i class="absolute inset-y-0 left-[159px] w-px bg-[#5fd0dd]"></i>
        </div>
        <div class="flex h-[7px] shrink-0 bg-[#eaeaea] pl-[31px] pt-px"><i class="flex h-1.5 w-[176px] shrink-0 items-center justify-center gap-0.5 border border-b-0 border-[#999] bg-[#ddd]"><i class="h-full w-px bg-[#666]"></i><i class="h-full w-px bg-[#666]"></i><i class="h-full w-px bg-[#666]"></i></i></div>
      </div>
      <div class="flex w-[17px] shrink-0 flex-col items-center bg-[#ebebeb] pb-3 pt-1.5"><svg class="h-1 w-1.5"><use href="#caretup"/></svg><i class="mt-[18px] flex h-[67px] w-[15px] items-center justify-center border border-[#999] bg-[#dcdcdc]"><svg class="h-2 w-[7px]"><use href="#menu"/></svg></i><svg class="mt-auto h-1 w-1.5"><use href="#caret"/></svg></div>
    </div>
  </main>

  <!-- inspector -->
  <aside class="relative flex w-[244px] shrink-0 flex-col overflow-hidden border-l-2 border-[#b4b4b4] bg-[#f3f3f4]">
    <div class="flex h-[25px] shrink-0 items-center border-b border-[#c4c4c4] bg-[#d9d9d9] pl-2.5"><svg class="h-2 w-2"><use href="#pin"/></svg><h2 class="ml-[90px]">检视: 组合</h2></div>
    <input aria-label="组合名称" placeholder="(组合名称)" class="h-[39px] w-full shrink-0 border-b border-[#ccc] bg-white pl-2.5 pt-0.5 text-base italic placeholder:text-[#888]">
    <div class="flex h-[27px] shrink-0 text-black"><button class="w-[89px] shrink-0 border-r border-white bg-[#d9d9da]">属性</button><button class="w-[90px] shrink-0 bg-[#d9d9da]">说明</button><button class="w-[89px] shrink-0 bg-[#1e9bd7] text-white">样式</button></div>
    <section class="h-[181px] shrink-0 border-b border-[#ccc] pl-2.5 pr-0.5">
      <div class="mt-[11px] flex items-center justify-between"><h3>位置・尺寸</h3><label class="flex items-center gap-[7px] text-black">隐藏<input type="checkbox" class="h-[13px] w-[13px] appearance-none border border-[#999] bg-[#e9e9e9]"></label></div>
      <div class="mt-3.5 flex pl-1 text-[9px] leading-4 text-black" id="pos1"></div>
      <h3 class="mt-[3px]">每个元件</h3>
      <div class="mt-[7px] flex pl-1 text-[9px] leading-4 text-black" id="pos2"></div>
      <div class="mt-[5px] flex pl-1 text-[9px] leading-4 text-black" id="pos3"></div>
    </section>
    <div class="flex h-[39px] shrink-0 items-center justify-end border-b border-[#ccc] bg-white pt-1"><svg class="h-1 w-2"><use href="#caret"/></svg><svg class="-mr-1 ml-3 h-[13px] w-3.5"><use href="#styledoc"/></svg></div>
    <div class="flex h-9 shrink-0 items-center justify-between border-b border-[#ccc] pl-2.5 pr-0.5"><h3>填充</h3><div class="flex gap-[11px]" data-dd="fillgray"></div></div>
    <div class="flex h-9 shrink-0 items-center justify-between border-b border-[#ccc] pl-2.5 pr-0.5"><h3>阴影</h3><div class="flex gap-[11px]" data-dd="shadow fillblue"></div></div>
    <div class="flex h-[66px] shrink-0 items-start justify-between border-b-2 border-[#b4b4b4] pl-2.5 pr-0.5 pt-2"><h3 class="mt-[3px] whitespace-nowrap">边框</h3><div class="flex w-[133px] flex-wrap justify-end gap-x-[11px] gap-y-2" data-dd="lines pencil dashes borderbox -arrows"></div></div>
    <div class="flex h-[27px] shrink-0 items-center bg-[#d9d9d9] pl-2.5 pr-1.5"><svg class="h-2 w-2"><use href="#pin"/></svg><h2 class="ml-[90px]">概要: 页面</h2><svg class="ml-auto h-2.5 w-3.5"><use href="#funnel"/></svg></div>
    <ul class="min-h-0 flex-1 overflow-hidden" id="outline"></ul>
    <div class="absolute left-[129px] top-[469px] flex h-[26px] w-[130px] items-center gap-2.5 border border-[#b9d4ea] bg-white pl-[5px] text-[#2a86d8] shadow-sm">
      <svg class="h-4 w-4 shrink-0 fill-current" viewBox="0 0 16 16"><ellipse cx="2.200" cy="6.500" rx="1.900" ry="2.300"/><ellipse cx="5.700" cy="2.700" rx="1.900" ry="2.500"/><ellipse cx="10.300" cy="2.700" rx="1.900" ry="2.500"/><ellipse cx="13.800" cy="6.500" rx="1.900" ry="2.300"/><path d="M8 6.500c2.500 0 3 2.500 4.500 4s1.500 5-1.500 5H5c-3 0-3-3.500-1.500-5S5.500 6.500 8 6.500z"/></svg>
      <b class="w-4 text-center text-[15px]">中</b>
      <svg class="h-4 w-4 shrink-0" viewBox="0 0 16 16"><circle cx="8" cy="8" r="7" fill="none" stroke="#2a86d8" stroke-width="1.500"/><path d="M4.500 8.500c.5 4.500 6.500 4.500 7 0" fill="none" stroke="#2a86d8" stroke-width="1.500"/><path d="M5 4.500h1.500v2H5zM9.500 4.500H11v2H9.500z" fill="#2a86d8"/></svg>
      <svg class="h-4 w-4 shrink-0" viewBox="0 0 16 16"><path d="M1 14l1.500-5L10 1.500l3.500 3.500L6 12.500z" fill="#2a86d8"/><path d="M7 14.500h8" stroke="#2a86d8" stroke-dasharray="1.500 1"/></svg>
      <svg class="h-3.5 w-3.5 shrink-0 text-[#2a86d8]"><use href="#gear"/></svg>
    </div>
  </aside>
</div>

<script>
const $ = id => document.getElementById(id);
const ic = (n, c) => `<svg class="${c}"><use href="#${n}"/></svg>`;
const tinyCaret = ic('caret', 'h-1 w-1.5');

/* toolbar */
const sep = m => `<i class="${m} mt-1.5 h-5 w-px shrink-0 bg-[#bdbdbd]"></i>`;
const tb = (n, label, size, w, caret, extra) => `<button class="${w} ${extra || ''} flex h-[38px] shrink-0 flex-col items-center justify-between whitespace-nowrap">${ic(n, size)}<span class="flex items-center gap-0.5">${label}${caret ? tinyCaret : ''}</span></button>`;
$('toolbar').insertAdjacentHTML('beforeend',
  tb('connect', '连接', 'h-[22px] w-5', 'w-[41px]', 0, 'ml-0.5') +
  tb('pen', '钢笔', 'h-[22px] w-4', 'w-10') +
  `<button class="flex h-[38px] w-10 shrink-0 flex-col items-center justify-between"><svg class="mt-2 h-1.5 w-5 fill-[#777]" viewBox="0 0 20 6"><circle cx="3" cy="3" r="2.300"/><circle cx="10" cy="3" r="2.300"/><circle cx="17" cy="3" r="2.300"/></svg><span class="flex items-center gap-0.5">更多${tinyCaret}</span></button>` +
  sep('ml-2.5') +
  `<div class="ml-[15px] mt-0.5 flex w-[57px] shrink-0 flex-col items-center gap-0.5"><div class="relative w-full"><select id="zoom" class="block h-[22px] w-full appearance-none border border-[#bbb] bg-white pl-0.5 text-[13px]"><option>50%</option></select><svg class="pointer-events-none absolute right-1 top-[9px] h-[5px] w-[7px]"><use href="#caret"/></svg></div><label for="zoom">缩放</label></div>` +
  sep('ml-4') + tb('front', '顶层', 'h-[22px] w-5', 'w-10', 0, 'ml-2') + tb('back', '底层', 'h-[22px] w-5', 'w-10') +
  sep('ml-2.5') + tb('group', '组合', 'h-[22px] w-[22px]', 'w-11', 0, 'ml-2') + tb('ungroup', '取消组合', 'h-[22px] w-6', 'w-11') +
  sep('ml-3') + tb('align', '对齐', 'h-[22px] w-5', 'w-10', 1, 'ml-2.5') +
  sep('ml-2.5') + tb('dist', '分布', 'h-[22px] w-[22px]', 'w-10', 1, 'ml-2.5') +
  sep('ml-3') + tb('lock', '锁定', 'h-[22px] w-[18px]', 'w-11', 0, 'ml-1.5') + tb('unlock', '取消锁定', 'h-[22px] w-[26px]', 'w-11', 0, 'text-[#888]') +
  sep('ml-3') + tb('pleft', '左', 'h-[22px] w-[21px]', 'w-10', 0, 'ml-2') + tb('pright', '右', 'h-[22px] w-[21px]', 'w-10') +
  tb('play', '预览', 'h-[22px] w-[19px]', 'w-10', 0, 'ml-auto') + tb('cloud', '共享', 'h-[22px] w-[26px]', 'w-10') + tb('publish', '发布', 'h-[22px] w-5', 'w-[42px]', 1) +
  sep('ml-2.5') + `<button class="ml-[17px] mt-1 flex h-5 w-[50px] shrink-0 items-center gap-1.5 whitespace-nowrap text-base text-[#666]"><svg class="h-3 w-3 shrink-0 fill-[#777]"><use href="#user"/></svg>登录</button>`);

/* format bar */
const fsel = (cls, v, lab) => `<span class="relative ${cls} h-5 shrink-0"><select aria-label="${lab}" class="block h-5 w-full appearance-none border border-[#bcbcbc] bg-inherit pl-0.5 text-xs text-black"><option>${v}</option></select><svg class="pointer-events-none absolute right-[3px] top-2 h-[5px] w-[7px]"><use href="#caret"/></svg></span>`;
const grp = (m, items) => `<span class="${m} flex h-5 shrink-0 border border-[#bcbcbc]">` + items.map(i => `<button class="flex w-[22px] items-center justify-center border-r border-[#bcbcbc] last:border-r-0">${i}</button>`).join('') + '</span>';
const dd = (n, m = '') => n[0] === '-'
  ? `<button disabled aria-label="箭头" class="${m} flex h-5 w-[37px] shrink-0 items-center justify-between border border-[#c4c4c4] bg-[#d4d4d6] pl-[5px] pr-[3px] opacity-70"><svg class="h-[13px] w-[13px]"><use href="#arrows"/></svg><svg class="h-[5px] w-[7px] opacity-30"><use href="#caret"/></svg></button>`
  : `<button class="${m} flex h-5 w-[37px] shrink-0 items-center justify-between border border-[#bcbcbc] pl-[5px] pr-[3px]">${ic(n, 'h-[13px] w-[13px]')}${ic('caret', 'h-[5px] w-[7px]')}</button>`;
const fsep = m => `<i class="${m} h-5 w-px shrink-0 bg-[#bdbdbd]"></i>`;
const num = (k, v, m) => `<label class="${m} flex shrink-0 items-center text-xs text-black"><span class="mr-[3px]">${k}:</span><input value="${v}" class="h-5 w-[34px] border border-[#bcbcbc] bg-white pl-0.5"></label>`;
$('format').innerHTML =
  fsel('ml-[5px] w-[100px] bg-white', '', '样式') + ic('styledoc', 'ml-2.5 h-[13px] w-3.5 shrink-0') + fsep('ml-2.5') +
  fsel('ml-2 w-[100px] bg-white', 'Arial', '字体') + fsel('ml-2 w-[90px] bg-[#d2d2d4]', '', '字形') + fsel('ml-2 w-[35px] bg-white', '', '字号') +
  grp('ml-2', ['<b class="text-[13px] text-[#555]">B</b>', '<b class="font-serif text-sm italic text-[#555]">I</b>', '<b class="text-xs text-[#555] underline">U</b>']) +
  `<button class="ml-1.5 flex h-5 w-[37px] shrink-0 items-center justify-between border border-[#bcbcbc] pl-[5px] pr-[3px]"><b class="h-[15px] w-3 border-b-[3px] border-black text-center text-xs leading-3 text-[#555]">A</b>${ic('caret', 'h-[5px] w-[7px]')}</button>` +
  grp('ml-2', [ic('bullets', 'h-3 w-3.5')]) + fsep('ml-2') +
  grp('ml-2', ['al', 'ac', 'ar'].map(n => ic(n, 'h-3 w-3'))) + grp('ml-1.5', ['vt', 'vm', 'vb'].map(n => ic(n, 'h-3 w-3'))) + fsep('ml-2') +
  dd('fillnavy', 'ml-2') + dd('shadow', 'ml-2') + fsep('ml-2') + dd('pencil', 'ml-2') + dd('lines', 'ml-2') + dd('dashes', 'ml-2') + dd('-arrows', 'ml-2') + fsep('ml-2.5') +
  num('x', 2023, 'ml-2.5') + num('y', 768, 'ml-1.5') + num('w', 707, 'ml-1.5') + ic('link', 'ml-0.5 h-2.5 w-3 shrink-0') + num('h', 375, 'ml-0.5') +
  `<label class="ml-2 flex shrink-0 items-center gap-1 text-black"><input type="checkbox" class="h-[13px] w-[13px] appearance-none border border-[#999] bg-[#f0f0f0]">隐藏</label>`;

/* document tabs */
$('tabs').innerHTML = ['充值余额','会员余额','全部会员','余额设置','分享领取记录','已退款','退换货订单','支付异常订单','已关闭订单','财务','已完成订单','设置黑名单','待收货订单','全部订单','订单','会员设置','关系设置'].map((t, i) =>
  i === 3 ? `<button class="flex shrink-0 grow items-center justify-between whitespace-nowrap bg-white px-2 font-bold text-black">${t}<svg class="ml-2.5 h-1.5 w-1.5" viewBox="0 0 6 6"><path d="M0 0l6 6M6 0L0 6" stroke="#999" stroke-width="1.500"/></svg></button>`
  : `<button class="flex shrink-0 grow items-center justify-between whitespace-nowrap border-r border-[#c4c4c4] pl-2 pr-[7px]">${t}<svg class="ml-2.5 h-1.5 w-1.5" viewBox="0 0 6 6"><path d="M0 0l6 6M6 0L0 6" stroke="#b5b5b5" stroke-width="1.500"/></svg></button>`).join('');

/* rulers: 100px on screen are 200 units; a label is drawn only where all of it fits */
function drawRulers() {
  const W = Math.round($('rulerx').getBoundingClientRect().width), H = Math.round($('rulery').getBoundingClientRect().height);
  let rx = `<path d="M15 13.500H${W}" stroke="#aaa"/>`, ry = `<path d="M14.500 0V${H}" stroke="#aaa"/>`;
  for (let p = 21; p < W; p += 10) {
    const major = (p - 11) % 100 === 0, mid = (p - 11) % 50 === 0;
    rx += `<path d="M${p + .5} 14v-${major ? 14 : mid ? 8 : 4}" stroke="#999"/>`;
    if (major && p > 100 && p + 24 < W) rx += `<text x="${p + 2}" y="9" font-size="9" fill="#333">${(p - 111) * 2 + 400}</text>`;
  }
  for (let p = 5; p < H; p += 10) {
    const major = (p - 75) % 100 === 0, mid = (p - 75) % 50 === 0;
    ry += `<path d="M15 ${p + .5}h-${major ? 15 : mid ? 8 : 4}" stroke="#999"/>`;
    if (major && p + 26 < H) ry += `<text transform="translate(9,${p + 4}) rotate(-90)" text-anchor="end" font-size="9" fill="#333">${(p - 75) * 2 + 400}</text>`;
  }
  $('rulerx').innerHTML = rx; $('rulery').innerHTML = ry;
}
drawRulers();
addEventListener('load', drawRulers);
const ro = new ResizeObserver(drawRulers);
ro.observe($('rulerx')); ro.observe($('rulery'));

/* page tree */
$('pages').innerHTML = ['退换货订单','已退款','批量发货','*财务','余额设置','会员余额','充值记录','转让记录','余额明细','收入明细','提现设置','提现统计','提现记录'].map((t, i) =>
  t[0] === '*' ? `<li class="flex h-[21px] items-center pl-1">${ic('tri', 'h-[7px] w-[7px]')}${ic('doc', 'ml-2.5 mr-2 h-3 w-2.5')}${t.slice(1)}</li>`
  : i === 4 ? `<li class="flex h-[21px] items-center gap-2 bg-[#c9e9f6] pl-[39px] font-medium text-black">${ic('doc', 'h-3 w-2.5')}${t}</li>`
  : `<li class="flex h-[21px] items-center gap-2 pl-[39px]">${ic('doc', 'h-3 w-2.5')}${t}</li>`).join('');

/* artboard navigation */
$('side').innerHTML = [['archive','商品'],['users','会员'],['cart','订单'],['adjust','应用'],['yen','财务'],['db','统计'],['gear','系统'],['puzzle','装修']].map(([n, t], i) =>
  `<li class="${i === 4 ? 'bg-[#33659a]' : 'bg-[#333]'} flex h-[35px] flex-col items-center justify-between py-0.5">${ic(n, i === 0 ? 'mt-0.5 h-[11px] w-3 fill-current text-white' : 'h-[15px] w-4 fill-current text-white')}${t}</li>`).join('');
const m2 = [['yen','会员余额'],['card','充值记录'],['sync','转让记录'],['file','余额明细'],['news','收入明细'],['share','提现设置'],['tiles','积分管理'],['toggle','转账审核'],['tablet','收益广告'],['table','批量充值']];
const mrow = ([n, t], h) => `<a href="#" class="${h} flex items-center gap-[5px] pl-3">${ic(n, 'h-[13px] w-[13px] fill-current text-[#0b3466]')}${t}</a>`;
$('menu2').innerHTML = `<div class="flex h-[247px] flex-col justify-between"><a href="#" class="flex h-[25px] items-center gap-[5px] border-y border-l-2 border-[#35a9b8] pl-2.5 text-[#2ab5c8]">${ic('gear', 'h-3 w-[13px] fill-current')}余额设置</a>${m2.slice(0, 7).map(r => mrow(r, 'h-[25px]')).join('')}</div>` + m2.slice(7).map(r => mrow(r, 'h-7')).join('');

/* calendars */
const days = [[29,30,1,2,3,4,5],[6,7,8,9,10,11,12],[13,14,15,16,17,18,19],[20,21,22,23,24,25,26],[27,28,29,30,31,1,2]];
const dateSel = (v, l) => `<span class="relative"><select aria-label="${l}" class="block h-[9px] w-[34px] appearance-none border border-[#6c6] bg-white pl-0.5 text-[7px] leading-none text-[#333]"><option>${v}</option></select><svg class="pointer-events-none absolute right-0.5 top-[3px] h-[3px] w-1"><use href="#caret"/></svg></span>`;
$('cals').innerHTML = [0, 1].map(c => `<div class="w-28"><div class="h-[103px] border border-[#7c7] bg-[#f1f1f1] pl-1 leading-none">
<div class="flex h-[17px] items-center justify-between px-1 text-[#666]"><b class="text-[10px] text-[#274]">‹</b><span class="outline-1 outline-dotted outline-[#7d7]">10月2019</span><b class="text-[10px] text-[#274]">›</b></div>
<div class="mt-[3px] flex w-28 justify-between border border-dotted border-[#9d9] pr-2 font-bold text-black">${[...'日一二三四五六'].map(d => `<span class="w-2 text-center">${d}</span>`).join('')}</div>
${days.map((r, ri) => `<div class="mt-[5px] flex h-2 w-28 justify-between border border-dotted border-[#7d7] pr-2 text-[7px] leading-[6px] text-[#4bb5ad]">${r.map((d, i) => `<span class="${(ri === 0 && i < 2) || (ri === 4 && i > 4) ? 'text-[#999]' : ''} ${c === 0 && d === 9 ? 'bg-[#0aa896] text-white' : ''} flex w-2 justify-center">${d}</span>`).join('')}</div>`).join('')}
</div><div class="mt-1.5 flex items-center gap-[3px] pl-1 leading-[9px]">${dateSel('18', '时')}<span class="w-1 text-[#274]">:</span>${dateSel('23', '分')}</div></div>`).join('');

/* inspector */
const box = (v, l, m = '') => `<label class="${m} flex w-[46px] flex-col items-center"><input value="${v}" class="h-5 w-full border border-[#b5b5b5] bg-white pl-0.5 text-[11px]">${l}</label>`;
const lk = `<span class="flex w-2.5 items-end justify-center pb-[3px]"><svg class="h-2.5 w-3 shrink-0"><use href="#link"/></svg></span>`;
$('pos1').innerHTML = box(2023, 'X轴坐标') + box(768, 'y轴坐标', 'ml-2.5') + box(707, '宽度', 'ml-[21px]') + lk + box(375, '高度');
$('pos2').innerHTML = box('', 'X轴坐标') + box('', 'y轴坐标', 'ml-2.5') + box('', '宽度', 'ml-[21px]') + lk + box('', '高度');
$('pos3').innerHTML = box('', '元件角度') + box('', '文本角度', 'ml-2.5');
document.querySelectorAll('[data-dd]').forEach(e => e.innerHTML = e.dataset.dd.split(' ').map(n => dd(n)).join(''));

/* outline tree: g group, d drop-down, a text, l/r chevrons, b box */
const kinds = { d: [ic('drop', 'h-[11px] w-4'), '(下拉列表框)'], a: ['<span class="w-4 text-center font-serif text-[15px] text-[#555]">A</span>', '(矩形)'], l: [ic('lt', 'h-4 w-4'), '(形状)'], r: [ic('gt', 'h-4 w-4'), '(形状)'], b: [ic('rect', 'h-3.5 w-4'), '(矩形)'] };
const ind = ['', 'pl-[38px]', 'pl-14'];
$('outline').innerHTML = `<li class="flex h-[21px] items-center bg-[#c9e9f6] pl-[7px]">${ic('tri', 'h-[7px] w-[7px]')}${ic('folder', 'ml-[7px] mr-[7px] h-3 w-3.5')}(组合)</li>` +
  ['1d','1a','1d','1d','1a','1d','g','2a','2a','2a','2a','2a','2a','2l','2r','2a','2b','g','2a'].map(s => s === 'g'
    ? `<li class="flex h-[21px] items-center pl-[25px]">${ic('tri', 'h-[7px] w-[7px]')}${ic('folder', 'ml-[7px] mr-[7px] h-3 w-3.5')}(组合)<i class="ml-auto flex h-[11px] w-[7px] items-center border-y border-l border-[#666] pl-0.5"><i class="h-[5px] w-full bg-[#1f97d4]"></i></i></li>`
    : `<li class="${ind[s[0]]} flex h-[21px] items-center gap-1.5">${kinds[s[1]][0]}${kinds[s[1]][1]}</li>`).join('');
</script>
</body>
</html>
